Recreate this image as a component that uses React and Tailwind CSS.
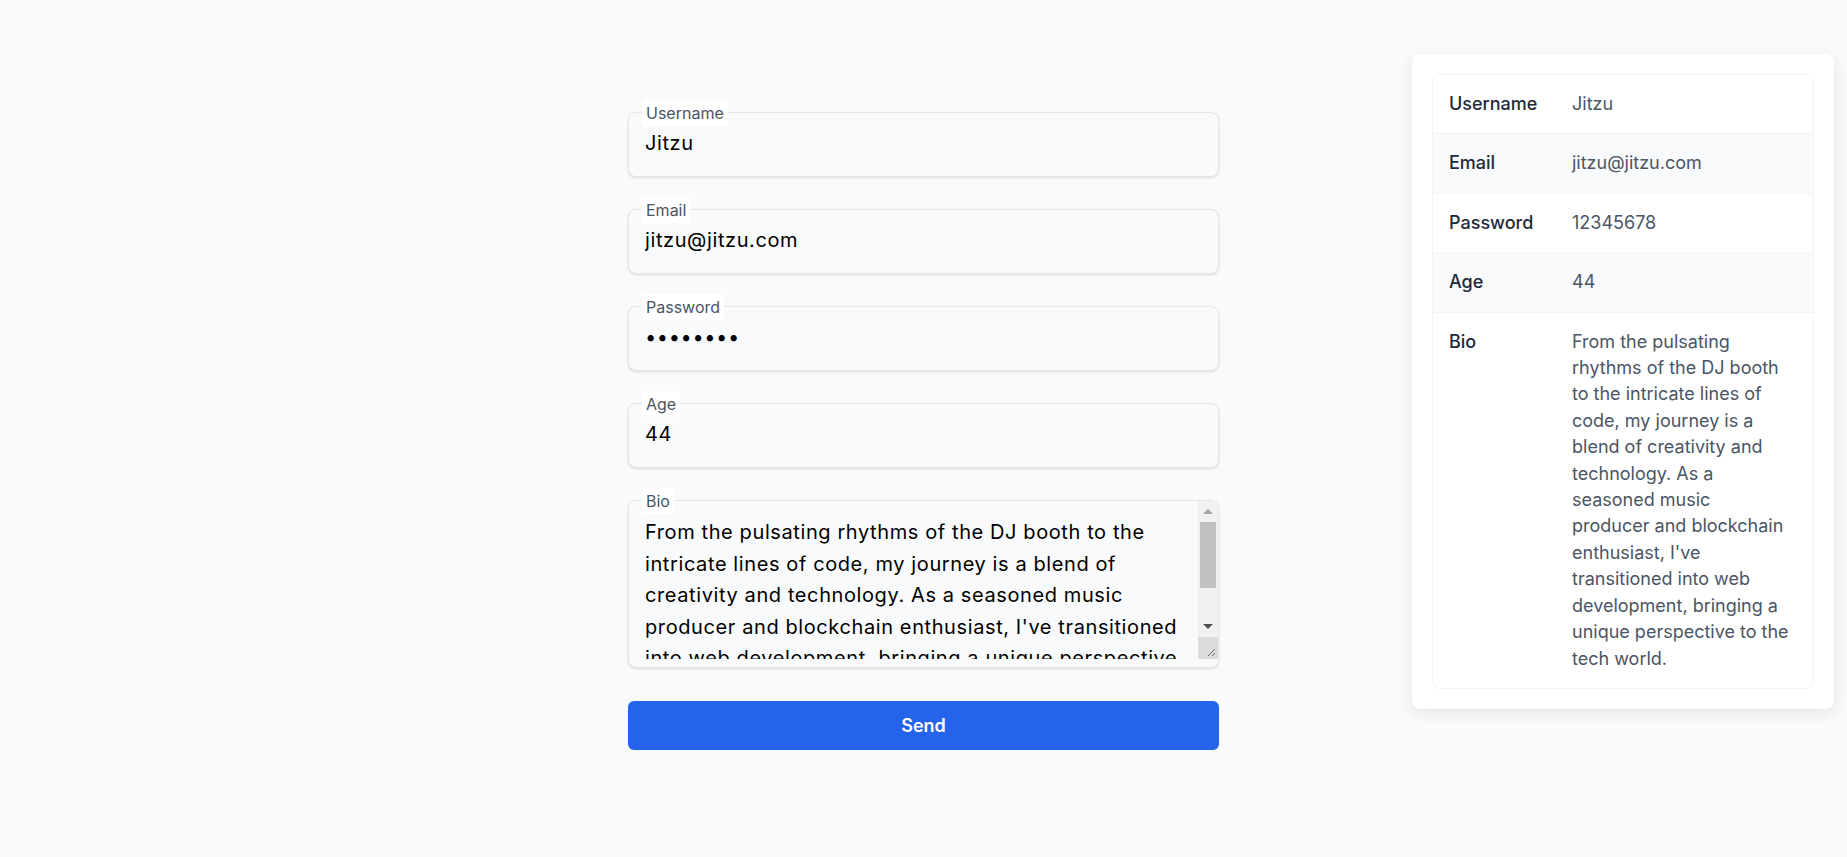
import { useState } from "react";

const bioText =
  "From the pulsating rhythms of the DJ booth to the intricate lines of code, my journey is a blend of creativity and technology. As a seasoned music producer and blockchain enthusiast, I've transitioned into web development, bringing a unique perspective to the tech world.";

function Field({ label, children }) {
  return (
    <div className="relative rounded-lg border border-gray-200 bg-gray-50 shadow-sm">
      <span className="absolute -top-[13px] left-[13px] bg-white px-1 py-1 text-[16px] leading-[18px] text-gray-600">
        {label}
      </span>
      {children}
    </div>
  );
}

export default function App() {
  const [form, setForm] = useState({
    username: "Jitzu",
    email: "jitzu@jitzu.com",
    password: "12345678",
    age: "44",
    bio: bioText,
  });

  const set = (key) => (e) => setForm({ ...form, [key]: e.target.value });

  const inputCls =
    "block w-full bg-transparent px-4 pt-4 pb-[19px] text-[20px] leading-7 tracking-[0.03em] text-black outline-none";

  const rows = [
    ["Username", form.username],
    ["Email", form.email],
    ["Password", form.password],
    ["Age", form.age],
    ["Bio", form.bio],
  ];

  return (
    <div className="min-h-screen bg-[#f9fafb] font-['Inter',sans-serif]">
      <div className="grid grid-cols-[1fr_591px_1fr]">
        <div />

        {/* Form */}
        <form className="flex flex-col gap-8 pt-[112px]" onSubmit={(e) => e.preventDefault()}>
          <Field label="Username">
            <input className={inputCls} value={form.username} onChange={set("username")} />
          </Field>
          <Field label="Email">
            <input className={inputCls} value={form.email} onChange={set("email")} />
          </Field>
          <Field label="Password">
            <input type="password" className={inputCls} value={form.password} onChange={set("password")} />
          </Field>
          <Field label="Age">
            <input className={inputCls} value={form.age} onChange={set("age")} />
          </Field>
          <Field label="Bio">
            <div className="relative pb-2">
              <textarea
                className="block h-[158px] w-full resize-none bg-transparent pl-4 pr-9 pt-4 text-[20px] leading-[31.5px] tracking-[0.03em] text-black outline-none"
                value={form.bio}
                onChange={set("bio")}
              />
              {/* scrollbar */}
              <div className="absolute right-0 top-0 flex h-[158px] w-5 flex-col bg-[#f1f1f1]">
                <div className="flex h-5 items-center justify-center">
                  <div className="h-0 w-0 border-x-[5px] border-b-[5px] border-x-transparent border-b-[#a3a3a3]" />
                </div>
                <div className="mx-[2px] mt-px h-[66px] bg-[#c1c1c1]" />
                <div className="flex-1" />
                <div className="flex h-5 items-center justify-center">
                  <div className="h-0 w-0 border-x-[5px] border-t-[5px] border-x-transparent border-t-[#505050]" />
                </div>
                <div className="relative mt-px h-[22px] bg-[#dcdcdc]">
                  <svg className="absolute bottom-[2px] right-[2px]" width="10" height="10" viewBox="0 0 10 10">
                    <path d="M9 2 L2 9 M9 6 L6 9" stroke="#6b6b6b" strokeWidth="1" />
                  </svg>
                </div>
              </div>
            </div>
          </Field>
          <button
            type="submit"
            className="mt-px h-[49px] w-full rounded-md bg-[#2563eb] text-lg font-semibold text-white"
          >
            Send
          </button>
        </form>

        {/* Preview */}
        <div className="flex justify-end pr-[13px] pt-[54px]">
          <div className="w-[422px] self-start rounded-lg bg-white p-5 shadow-[0_4px_16px_rgba(0,0,0,0.09)]">
            <div className="overflow-hidden rounded-lg border border-gray-100">
              {rows.map(([k, v], i) => (
                <div
                  key={k}
                  className={`flex border-gray-100 ${i > 0 ? "border-t" : ""} ${i % 2 === 1 ? "bg-gray-50" : "bg-white"}`}
                >
                  <div className="w-[139px] shrink-0 px-4 py-4 text-[18px] leading-[26.4px] font-medium text-gray-800">
                    {k}
                  </div>
                  <div className="min-w-0 flex-1 py-4 pr-[23px] text-[18px] leading-[26.4px] text-gray-600">
                    {v}
                  </div>
                </div>
              ))}
            </div>
          </div>
        </div>
      </div>
    </div>
  );
}
